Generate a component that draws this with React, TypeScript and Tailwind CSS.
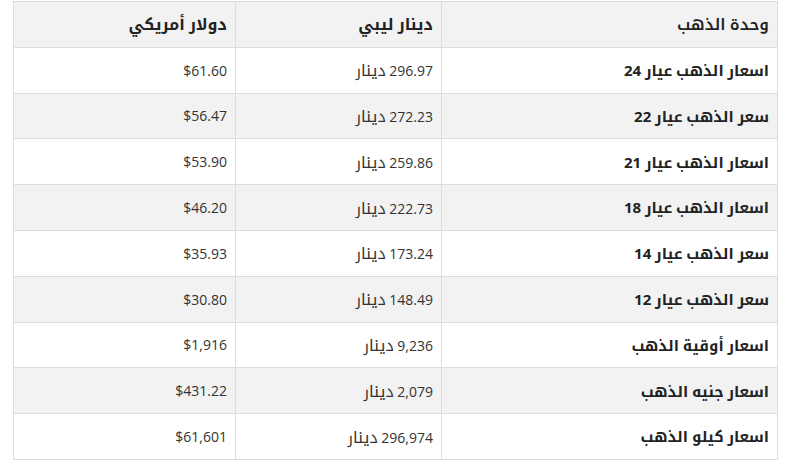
import React from "react";

const rows: [string, string, string][] = [
  ["اسعار الذهب عيار 24", "296.97", "$61.60"],
  ["سعر الذهب عيار 22", "272.23", "$56.47"],
  ["اسعار الذهب عيار 21", "259.86", "$53.90"],
  ["اسعار الذهب عيار 18", "222.73", "$46.20"],
  ["سعر الذهب عيار 14", "173.24", "$35.93"],
  ["سعر الذهب عيار 12", "148.49", "$30.80"],
  ["اسعار أوقية الذهب", "9,236", "$1,916"],
  ["اسعار جنيه الذهب", "2,079", "$431.22"],
  ["اسعار كيلو الذهب", "296,974", "$61,601"],
];

export default function App() {
  return (
    <div
      className="w-[791px] h-[473px] bg-white pt-px pl-[13px] text-[#333]"
      style={{ fontFamily: '"Open Sans", "Noto Kufi Arabic", sans-serif' }}
    >
      <table dir="rtl" className="w-[764px] border-collapse table-fixed text-[14px]">
        <colgroup>
          <col className="w-[336px]" />
          <col className="w-[206px]" />
          <col className="w-[222px]" />
        </colgroup>
        <thead>
          <tr className="bg-[#f2f2f2] h-[45.8px]">
            <th className="border border-[#dddddd] px-2 text-right font-semibold text-[16px] text-[#222]">وحدة الذهب</th>
            <th className="border border-[#dddddd] px-2 text-right font-bold text-[16px] text-[#222]">دينار ليبي</th>
            <th className="border border-[#dddddd] px-2 text-right font-bold text-[16px] text-[#222]">دولار أمريكي</th>
          </tr>
        </thead>
        <tbody>
          {rows.map((r, i) => (
            <tr key={i} className={i % 2 === 1 ? "bg-[#f2f2f2] h-[45.8px]" : "bg-white h-[45.8px]"}>
              <td className="border border-[#dddddd] px-2 text-right font-bold text-[15px] text-[#222]">{r[0]}</td>
              <td className="border border-[#dddddd] px-2 text-right">
                {r[1]} <span className="text-[16px]">دينار</span>
              </td>
              <td className="border border-[#dddddd] px-2 text-right">{r[2]}</td>
            </tr>
          ))}
        </tbody>
      </table>
    </div>
  );
}
